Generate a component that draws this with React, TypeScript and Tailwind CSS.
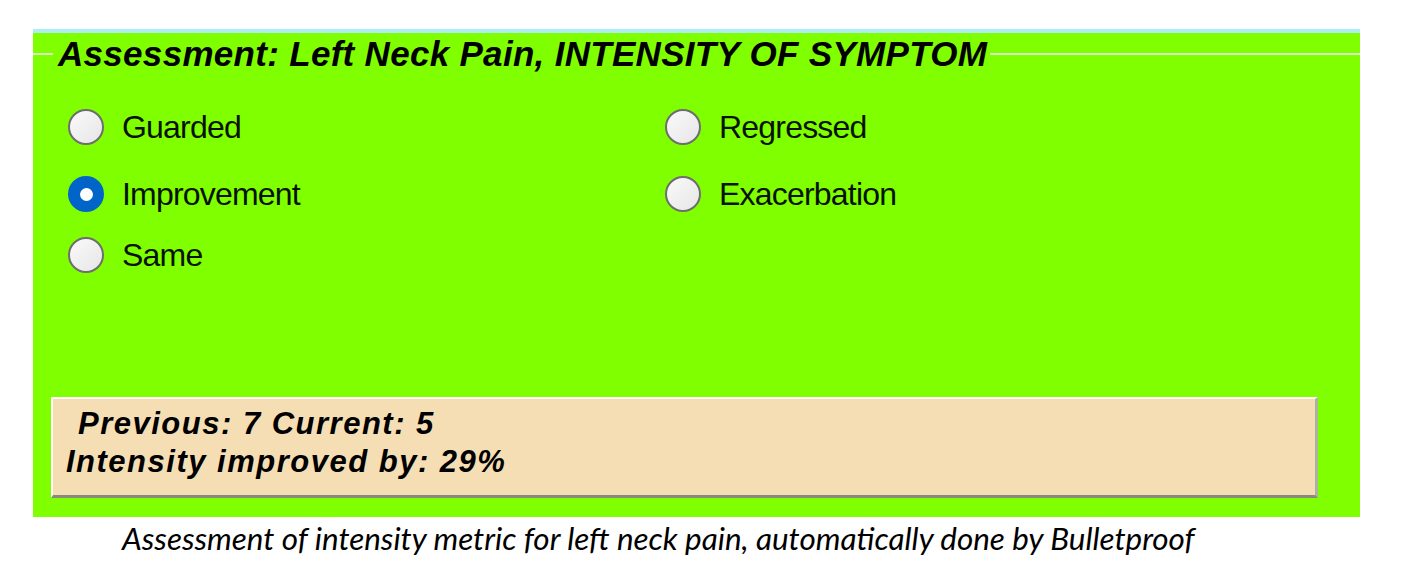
import React from "react";

type Opt = { label: string; checked?: boolean };

const left: Opt[] = [
  { label: "Guarded" },
  { label: "Improvement", checked: true },
  { label: "Same" },
];
const right: Opt[] = [{ label: "Regressed" }, { label: "Exacerbation" }];

const rowMargins = ["mt-[33px]", "mt-[27px]", "mt-[21px]"];

function Radio({ label, checked }: Opt) {
  return (
    <label className="flex h-[40px] items-center gap-[18px]">
      {checked ? (
        <span className="flex h-[36px] w-[36px] items-center justify-center rounded-full bg-[#0064c8]">
          <span className="h-[13px] w-[13px] rounded-full bg-white" />
        </span>
      ) : (
        <span className="h-[36px] w-[36px] rounded-full border-2 border-[#6e6e6e] bg-gradient-to-br from-[#fafafa] to-[#e6e6e6]" />
      )}
      <span className="text-[32px] leading-[40px] tracking-[-0.8px] text-[#061200]">{label}</span>
    </label>
  );
}

export default function App() {
  return (
    <div
      className="h-[571px] w-[1412px] overflow-hidden bg-white pt-[29px]"
      style={{ fontFamily: '"Liberation Sans", Arial, sans-serif' }}
    >
      <div className="ml-[33px] flex h-[488px] w-[1327px] flex-col border-t-4 border-[#aeedf3] bg-[#80ff00]">
        <div className="flex h-[41px] items-center">
          <div className="h-[2px] w-[20px] bg-[#d6f5c4]" />
          <h1 className="pl-[5px] pr-[3px] text-[35px] font-bold italic leading-[41px] tracking-[0.3px] text-black">
            Assessment: Left Neck Pain, INTENSITY OF SYMPTOM
          </h1>
          <div className="h-[2px] flex-1 bg-[#d6f5c4]" />
        </div>

        <div className="grid grid-cols-[597px_1fr] pl-[35px]">
          {[0, 1, 2].map((i) => (
            <React.Fragment key={i}>
              <div className={rowMargins[i]}>
                <Radio {...left[i]} />
              </div>
              <div className={rowMargins[i]}>{right[i] && <Radio {...right[i]} />}</div>
            </React.Fragment>
          ))}
        </div>

        <div className="mb-[19px] ml-[18px] mt-auto h-[101px] w-[1267px] border-2 border-b-[3px] border-r-[3px] border-white border-b-[#8a8a7a] border-r-[#b0b0a0] bg-[#f5deb3] pl-[13px] pt-[6px] text-[31px] font-bold italic leading-[38px] tracking-[1.5px] text-black">
          <p className="ml-[12px]">Previous: 7 Current: 5</p>
          <p>Intensity improved by: 29%</p>
        </div>
      </div>

      <p
        className="pl-[122px] pt-[3px] text-[31.4px] italic leading-[36px] text-black"
        style={{ fontFamily: "Lato, 'Liberation Sans', sans-serif" }}
      >
        Assessment of intensity metric for left neck pain, automatically done by Bulletproof
      </p>
    </div>
  );
}
